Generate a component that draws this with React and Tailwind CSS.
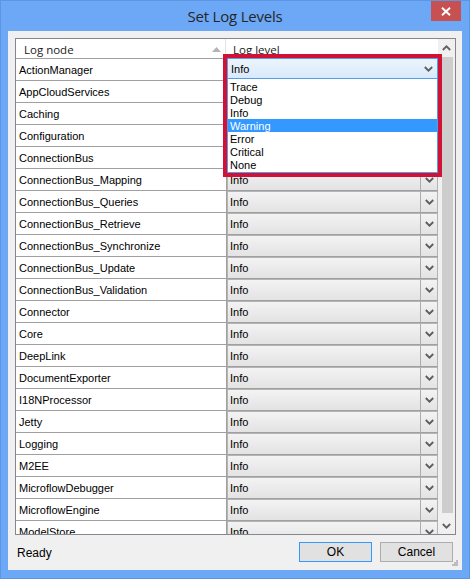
import React from "react";

const names = [
  "ActionManager",
  "AppCloudServices",
  "Caching",
  "Configuration",
  "ConnectionBus",
  "ConnectionBus_Mapping",
  "ConnectionBus_Queries",
  "ConnectionBus_Retrieve",
  "ConnectionBus_Synchronize",
  "ConnectionBus_Update",
  "ConnectionBus_Validation",
  "Connector",
  "Core",
  "DeepLink",
  "DocumentExporter",
  "I18NProcessor",
  "Jetty",
  "Logging",
  "M2EE",
  "MicroflowDebugger",
  "MicroflowEngine",
  "ModelStore",
];

const levels = ["Trace", "Debug", "Info", "Warning", "Error", "Critical", "None"];

function Chevron({ up = false, color = "#5c5c5c" }) {
  return (
    <svg width="9" height="6" viewBox="0 0 9 6" className="block">
      <path
        d={up ? "M0.8 5L4.5 1.3L8.2 5" : "M0.8 1L4.5 4.7L8.2 1"}
        fill="none"
        stroke={color}
        strokeWidth="1.8"
      />
    </svg>
  );
}

export default function App() {
  return (
    <div className="relative w-[470px] h-[579px] bg-[#6ca8f6] border border-[#5b95e3] flex flex-col overflow-hidden font-['Liberation_Sans',Arial,sans-serif] text-[11px] text-black">
      {/* Title bar */}
      <div className="relative h-[30px] shrink-0 flex items-center justify-center">
        <span className="font-['Open_Sans',sans-serif] text-[15px] text-[#262626] tracking-[-0.2px] mt-[1px]">
          Set Log Levels
        </span>
        <div className="absolute right-[8px] top-0 w-[30px] h-[20px] bg-[#c75050] flex items-center justify-center">
          <svg width="10" height="9" viewBox="0 0 10 9">
            <path d="M1 0.8L9 8.2M9 0.8L1 8.2" stroke="#ffffff" strokeWidth="2" fill="none" />
          </svg>
        </div>
      </div>

      {/* Client area */}
      <div className="relative mx-[7px] h-[539px] shrink-0 bg-[#f0f0f0] flex flex-col pl-[7px] pr-[6px] pt-[7px]">
        {/* Grid */}
        <div className="h-[497px] shrink-0 border border-[#828790] bg-white flex overflow-hidden">
          <div className="w-[422px] flex flex-col shrink-0">
            {/* Header */}
            <div className="h-[20px] shrink-0 flex border-b border-[#a0a0a0] font-['Open_Sans',sans-serif] text-[11.5px] text-[#1a1a1a]">
              <div className="w-[210px] shrink-0 flex items-center justify-between pl-[8px] pr-[4px] border-r border-[#e3e3e3]">
                <span className="pt-[2px]">Log node</span>
                <svg width="9" height="5" viewBox="0 0 9 5" className="block mt-[1px]">
                  <path d="M0 5L4.5 0L9 5Z" fill="#b3b3b3" />
                </svg>
              </div>
              <div className="flex-1 flex items-center pl-[7px]">
                <span className="pt-[2px]">Log level</span>
              </div>
            </div>
            {/* Rows */}
            {names.map((n) => (
              <div key={n} className="h-[22px] shrink-0 flex border-b border-[#a0a0a0]">
                <div className="w-[210px] shrink-0 flex items-center pl-[3px] pt-[2px] whitespace-nowrap">
                  {n}
                </div>
                <div className="w-[212px] shrink-0 flex border-l border-[#a0a0a0]">
                  <div className="flex-1 flex border-l border-r border-t border-[#b4b4b4] bg-linear-to-b from-[#f3f3f3] to-[#e3e3e3]">
                    <div className="flex-1 flex items-center pl-[2px] pt-[1px]">Info</div>
                    <div className="w-[17px] flex items-center justify-center border-l border-[#acacac]">
                      <Chevron />
                    </div>
                  </div>
                </div>
              </div>
            ))}
          </div>
          {/* Scrollbar */}
          <div className="w-[17px] shrink-0 bg-[#f0f0f0] flex flex-col">
            <div className="h-[17px] shrink-0 flex items-center justify-center">
              <Chevron up color="#606060" />
            </div>
            <div className="mt-[1px] ml-[4px] w-[11px] h-[456px] bg-[#cdcdcd]" />
            <div className="flex-1" />
            <div className="h-[17px] shrink-0 flex items-center justify-center">
              <Chevron color="#606060" />
            </div>
          </div>
        </div>

        {/* Status row */}
        <div className="mt-[7px] h-[20px] flex items-center">
          <span className="pl-[2px] pt-[1px] text-[12px]">Ready</span>
          <div className="flex-1" />
          <button className="w-[73px] h-[20px] border border-[#3399ff] bg-[#e1e1e1] text-[12px] flex items-center justify-center">
            OK
          </button>
          <button className="ml-[8px] mr-[3px] w-[73px] h-[20px] border border-[#adadad] bg-[#e1e1e1] text-[12px] flex items-center justify-center">
            Cancel
          </button>
        </div>

        {/* Resize grip */}
        <svg width="7" height="7" viewBox="0 0 7 7" className="absolute right-[4px] bottom-[4px]">
          <rect x="5" y="1" width="2" height="2" fill="#bdbdbd" />
          <rect x="3" y="3" width="2" height="2" fill="#bdbdbd" />
          <rect x="5" y="3" width="2" height="2" fill="#bdbdbd" />
          <rect x="1" y="5" width="2" height="2" fill="#bdbdbd" />
          <rect x="3" y="5" width="2" height="2" fill="#bdbdbd" />
          <rect x="5" y="5" width="2" height="2" fill="#bdbdbd" />
        </svg>
      </div>

      {/* Open dropdown with red highlight */}
      <div className="absolute left-[222px] top-[53px] w-[219px] border-4 border-[#cf1236] flex flex-col">
        <div className="h-[21px] flex border border-[#569de5] bg-linear-to-b from-[#ecf4fc] to-[#d8eafc]">
          <div className="flex-1 flex items-center pl-[3px] pt-[2px]">Info</div>
          <div className="w-[17px] flex items-center justify-center">
            <Chevron />
          </div>
        </div>
        <div className="border border-t-0 border-[#569de5] bg-white pt-[1px] pb-[1px]">
          {levels.map((l) => (
            <div
              key={l}
              className={
                l === "Warning"
                  ? "h-[13px] leading-[15px] pl-[2px] bg-[#3399ff] text-white"
                  : "h-[13px] leading-[15px] pl-[2px]"
              }
            >
              {l}
            </div>
          ))}
        </div>
      </div>
    </div>
  );
}
